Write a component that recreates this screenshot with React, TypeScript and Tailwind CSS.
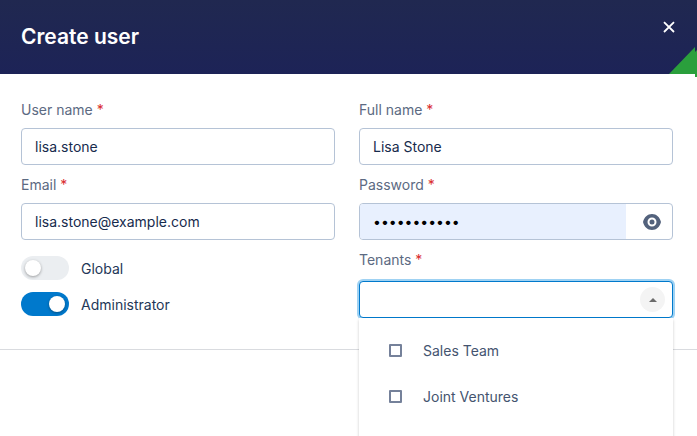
import { useState } from 'react';
import type { ReactNode } from 'react';

const inputClass =
  'h-[37px] w-full rounded border border-[#b5c3d6] bg-white px-[13px] text-[#172b4d] outline-none';

const tenants = ['Sales Team', 'Joint Ventures'];

function Field({ id, label, children }: { id: string; label: string; children: ReactNode }) {
  return (
    <div>
      <label htmlFor={id} className="mb-2 block leading-5 text-[#5c6a82]">
        {label} <span className="text-[#d92d2d]">*</span>
      </label>
      {children}
    </div>
  );
}

function Toggle({ label, defaultChecked }: { label: string; defaultChecked?: boolean }) {
  return (
    <label className="flex w-fit cursor-pointer items-center gap-3 text-[#243757]">
      <input type="checkbox" role="switch" defaultChecked={defaultChecked} className="peer sr-only" />
      <span className="flex h-6 w-12 items-center rounded-full bg-[#ebeef1] px-1 peer-checked:justify-end peer-checked:bg-[#0079cc]">
        <span className="size-4 rounded-full bg-white shadow-[0_1px_3px_rgba(0,0,0,0.35)]" />
      </span>
      {label}
    </label>
  );
}

export default function App() {
  const [userName, setUserName] = useState('lisa.stone');
  const [fullName, setFullName] = useState('Lisa Stone');
  const [email, setEmail] = useState('lisa.stone@example.com');
  const [password, setPassword] = useState('Summer-2024');
  const [showPassword, setShowPassword] = useState(false);
  const [open, setOpen] = useState(true);
  const [search, setSearch] = useState('');

  return (
    <div className="h-screen overflow-hidden bg-white font-['Inter',sans-serif] text-[14px]">
      <header className="relative flex h-[74px] items-center justify-between bg-linear-to-b from-[#202850] to-[#1d2357] pr-5 pl-[21px]">
        <h1 className="text-[21px] font-semibold text-white">Create user</h1>
        <button type="button" aria-label="Close" className="mb-5 flex size-4 items-center justify-center">
          <svg viewBox="0 0 16 16" className="size-4" stroke="white" strokeWidth="1.8" fill="none">
            <path d="M3 3.2l10 9.8M13 3.2L3 13" />
          </svg>
        </button>
        <svg viewBox="0 0 28 30" className="absolute right-0 -bottom-[3px] h-[30px] w-7" fill="#2a9f3c">
          <path d="M0 27L26 0v5l2-2v27h-2v-3z" />
        </svg>
      </header>

      <form className="grid grid-cols-2 gap-x-6 border-b border-[#d9dbdf] pt-[26px] pr-6 pb-[31px] pl-[21px]">
        <div className="flex flex-col gap-[10px]">
          <Field id="userName" label="User name">
            <input id="userName" className={inputClass} value={userName} onChange={(e) => setUserName(e.target.value)} />
          </Field>
          <Field id="email" label="Email">
            <input id="email" className={inputClass} value={email} onChange={(e) => setEmail(e.target.value)} />
          </Field>
          <div className="flex flex-col gap-3 pt-1.5">
            <Toggle label="Global" />
            <Toggle label="Administrator" defaultChecked />
          </div>
        </div>

        <div className="flex flex-col gap-[10px]">
          <Field id="fullName" label="Full name">
            <input id="fullName" className={inputClass} value={fullName} onChange={(e) => setFullName(e.target.value)} />
          </Field>
          <Field id="password" label="Password">
            <div className="flex h-[37px] overflow-hidden rounded border border-[#b5c3d6]">
              <input
                id="password"
                type={showPassword ? 'text' : 'password'}
                className="min-w-0 flex-1 bg-[#e8f0fe] px-[13px] text-black outline-none"
                value={password}
                onChange={(e) => setPassword(e.target.value)}
              />
              <button
                type="button"
                aria-label="Show password"
                className="flex w-[46px] items-center justify-center pl-1.5"
                onClick={() => setShowPassword(!showPassword)}
              >
                <svg viewBox="0 0 18 16" className="h-4 w-[18px]" fill="#53627c">
                  <path
                    fillRule="evenodd"
                    d="M9 0C4.500 0 1.200 3.200 0 8c1.200 4.800 4.500 8 9 8s7.800-3.200 9-8c-1.200-4.800-4.500-8-9-8zm0 3.500a4.500 4.500 0 1 1 0 9a4.500 4.500 0 0 1 0-9zm0 2a2.500 2.500 0 1 0 0 5a2.500 2.500 0 0 0 0-5z"
                  />
                </svg>
              </button>
            </div>
          </Field>
          <Field id="tenants" label="Tenants">
            <div className="relative pt-[3px]">
              <div className="flex h-[37px] items-center rounded border border-[#0079cc] bg-white pr-[7px] ring-2 ring-[#9fd2f3]">
                <input
                  id="tenants"
                  role="combobox"
                  aria-expanded={open}
                  aria-controls="tenant-list"
                  className="h-full min-w-0 flex-1 px-[13px] text-[#172b4d] outline-none"
                  value={search}
                  onChange={(e) => setSearch(e.target.value)}
                />
                <button
                  type="button"
                  aria-label="Toggle tenants"
                  className="flex size-[25px] items-center justify-center rounded-full bg-[#f4f4f4]"
                  onClick={() => setOpen(!open)}
                >
                  <svg viewBox="0 0 8 4" className="h-1 w-2" fill="#6b6b6b">
                    <path d="M0 4l4-4 4 4z" />
                  </svg>
                </button>
              </div>
              {open && (
                <ul
                  id="tenant-list"
                  className="absolute inset-x-0 top-full h-40 bg-white pt-[9px] shadow-[0_2px_3px_rgba(0,0,0,0.2)]"
                >
                  {tenants.map((tenant) => (
                    <li key={tenant}>
                      <label className="flex h-[46px] items-center gap-[21px] px-[30px] text-[#44546f]">
                        <input
                          type="checkbox"
                          className="size-[13px] appearance-none rounded-[1px] border-2 border-[#75819a] checked:bg-[#0079cc]"
                        />
                        {tenant}
                      </label>
                    </li>
                  ))}
                </ul>
              )}
            </div>
          </Field>
        </div>
      </form>
    </div>
  );
}
